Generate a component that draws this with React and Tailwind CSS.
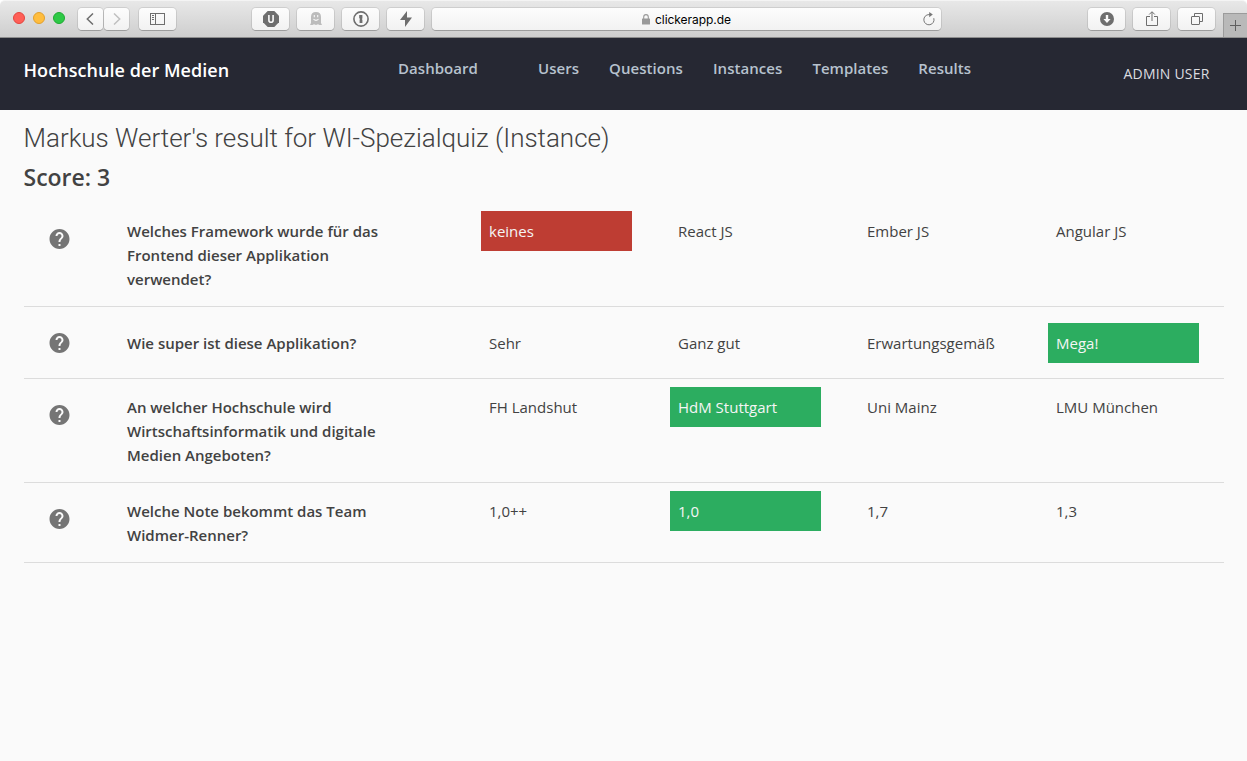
import React from "react";

const sans = "font-['Open_Sans','Noto_Sans',sans-serif]";

function ToolButton({ className = "", children }) {
  return (
    <div
      className={
        "flex h-[22px] items-center justify-center rounded-[4px] bg-linear-to-b from-[#fdfdfd] to-[#f2f2f2] text-[#6e6e6e] shadow-[0_0_0_1px_rgba(0,0,0,0.09),0_1px_0_0_rgba(0,0,0,0.18)] " +
        className
      }
    >
      {children}
    </div>
  );
}

function BrowserBar() {
  return (
    <div className="bg-white">
      <div className="flex h-[38px] rounded-t-[5px] border-t border-b border-t-[#f4f4f4] border-b-[#8d8d8d] bg-linear-to-b from-[#e8e8e8] to-[#cecece] pl-[13px]">
        <div className="flex w-[65px] gap-2 pt-[11px]">
          <span className="h-3 w-3 rounded-full border border-[#e2463f] bg-[#ff5f57]" />
          <span className="h-3 w-3 rounded-full border border-[#e1a02e] bg-[#ffbd3e]" />
          <span className="h-3 w-3 rounded-full border border-[#1faa32] bg-[#2ec946]" />
        </div>
        <div className="flex pt-[7px]">
          <ToolButton className="w-[25px] pr-[2px]">
            <svg width="8" height="12" viewBox="0 0 8 12" fill="none" stroke="#6e6e6e" strokeWidth="1.5"><path d="M7 .5L1.3 6L7 11.5" /></svg>
          </ToolButton>
          <ToolButton className="ml-px w-[25px]">
            <svg width="8" height="12" viewBox="0 0 8 12" fill="none" stroke="#c0c0c0" strokeWidth="1.5"><path d="M1 .5L6.7 6L1 11.5" /></svg>
          </ToolButton>
          <ToolButton className="ml-[10px] w-[37px]">
            <svg width="15" height="12" viewBox="0 0 15 12" fill="none" stroke="#6e6e6e"><rect x=".5" y=".5" width="14" height="11" /><path d="M5.5 0V12M2 2.5H4M2 4.5H4M2 6.5H4" /></svg>
          </ToolButton>
          <ToolButton className="ml-[76px] w-[37px]">
            <svg width="16" height="16" viewBox="0 0 16 16"><path d="M4.7 0H11.3L16 4.7V11.3L11.3 16H4.7L0 11.3V4.7Z" fill="#6e6e6e" /><path d="M5.9 4V9.2Q5.9 11.2 8 11.2T10.1 9.2V4" fill="none" stroke="#fafafa" strokeWidth="1.6" /></svg>
          </ToolButton>
          <ToolButton className="ml-2 w-[37px]">
            <svg width="12" height="14" viewBox="0 0 12 14"><path d="M1 5Q1 0 6 0T11 5V11L12 13L9.5 13L8 12.2L6 13L4 12.2L2.5 13H0L1 11Z" fill="#bcbcbc" /><path d="M4.3 3V5.2M7.7 3V5.2M3.5 7.2Q6 9.6 8.5 7.2" fill="none" stroke="#f8f8f8" strokeWidth="1.1" /></svg>
          </ToolButton>
          <ToolButton className="ml-2 w-[37px]">
            <svg width="16" height="16" viewBox="0 0 16 16"><circle cx="8" cy="8" r="7.1" fill="none" stroke="#6e6e6e" strokeWidth="1.6" /><path d="M6.2 4H9.4V7.4L8.8 8L9.4 8.7V12H6.6V8.6L7.2 8L6.2 7.3Z" fill="#6e6e6e" /></svg>
          </ToolButton>
          <ToolButton className="ml-2 w-[37px]">
            <svg width="12" height="16" viewBox="0 0 12 16"><path d="M7 0L0 9H5L5 16L12 6.5H7Z" fill="#6e6e6e" /></svg>
          </ToolButton>
          <ToolButton className="ml-2 w-[509px] justify-between! pr-1.5 pl-[210px]">
            <div className="flex items-center gap-[5px]">
              <svg width="8" height="11" viewBox="0 0 8 11"><rect y="4.5" width="8" height="6" rx=".5" fill="#999" /><path d="M1.7 5V3Q1.7 .6 4 .6T6.3 3V5" fill="none" stroke="#999" strokeWidth="1.1" /></svg>
              <span className="pt-px font-[Inter,sans-serif] text-[12px] leading-[22px] tracking-[-0.05px] text-black">clickerapp.de</span>
            </div>
            <svg width="12" height="14" viewBox="0 0 12 14" fill="none" stroke="#777"><path d="M10.8 6.2A5.1 5.1 0 1 1 6 2.6H8" /><path d="M6.2 0L9.8 2.6L6.2 5.2Z" fill="#777" stroke="none" /></svg>
          </ToolButton>
          <ToolButton className="ml-[147px] w-[37px]">
            <svg width="14" height="14" viewBox="0 0 14 14"><circle cx="7" cy="7" r="7" fill="#6e6e6e" /><path d="M5.8 3H8.2V7H10.6L7 11L3.4 7H5.8Z" fill="#fafafa" /></svg>
          </ToolButton>
          <ToolButton className="ml-2 w-[37px] pb-[2px]">
            <svg width="12" height="15" viewBox="0 0 12 15" fill="none" stroke="#6e6e6e"><path d="M4 5.5H.5V14.5H11.5V5.5H8M6 10V1M3.2 3.5L6 .7L8.8 3.5" /></svg>
          </ToolButton>
          <ToolButton className="ml-2 w-[37px]">
            <svg width="12" height="12" viewBox="0 0 12 12" fill="none" stroke="#6e6e6e"><rect x=".5" y="3.5" width="8" height="8" rx=".5" /><path d="M3.5 3.5V.5H11.5V8.5H8.5" /></svg>
          </ToolButton>
        </div>
        <div className="ml-[8px] mt-[12px] flex flex-1 items-center justify-center border-t border-l border-[#9b9b9b] bg-[#b9b9b9]">
          <svg width="11" height="11" viewBox="0 0 11 11" stroke="#5f5f5f"><path d="M5.5 0V11M0 5.5H11" /></svg>
        </div>
      </div>
    </div>
  );
}

function AppHeader() {
  return (
    <header className="flex h-[72px] bg-[#262833]">
      <div className="w-[398px] pl-[23.5px] pt-5 text-[18px] leading-6 font-semibold tracking-[0.06px] text-white">
        Hochschule der Medien
      </div>
      <nav className="flex flex-1 gap-[30px] pt-[18px] text-[15px] leading-6 font-semibold tracking-[0.05px] text-[#b7c2ce]">
        <span className="mr-[30px]">Dashboard</span>
        <span>Users</span>
        <span>Questions</span>
        <span>Instances</span>
        <span>Templates</span>
        <span>Results</span>
      </nav>
      <div className="pt-6 pr-[37.5px] text-[14px] leading-6 tracking-[0.2px] text-[#dcdde0]">ADMIN USER</div>
    </header>
  );
}

const rows = [
  { question: "Welches Framework wurde für das Frontend dieser Applikation verwendet?", answers: ["keines", "React JS", "Ember JS", "Angular JS"], wrong: 0 },
  { question: "Wie super ist diese Applikation?", answers: ["Sehr", "Ganz gut", "Erwartungsgemäß", "Mega!"], right: 3 },
  { question: "An welcher Hochschule wird Wirtschaftsinformatik und digitale Medien Angeboten?", answers: ["FH Landshut", "HdM Stuttgart", "Uni Mainz", "LMU München"], right: 1 },
  { question: "Welche Note bekommt das Team Widmer-Renner?", answers: ["1,0++", "1,0", "1,7", "1,3"], right: 1 },
];

function ResultRow({ question, answers, right, wrong }) {
  const single = question.length < 35;
  return (
    <li className={"flex items-start border-b border-[#dcdcdc] " + (single ? "pt-4 pb-[15px]" : "pt-2 pb-[7px]")}>
      <div className={"w-[95px] pl-[23.5px] " + (single ? "pt-2" : "pt-4")}>
        <svg width="24" height="24" viewBox="0.5 0 24 24" fill="#757575"><path d="M12 2C6.48 2 2 6.48 2 12s4.48 10 10 10 10-4.48 10-10S17.52 2 12 2zm1 17h-2v-2h2v2zm2.07-7.75l-.9.92C13.45 12.9 13 13.5 13 15h-2v-.5c0-1.1.45-2.1 1.17-2.83l1.24-1.26c.37-.36.59-.86.59-1.41 0-1.1-.9-2-2-2s-2 .9-2 2H8c0-2.21 1.79-4 4-4s4 1.79 4 4c0 .88-.36 1.68-.93 2.25z" /></svg>
      </div>
      <div className="w-[283px] p-2 font-semibold">{question}</div>
      <div className="ml-[79px] flex gap-[38px]">
        {answers.map((a, i) => (
          <div key={a} className={"w-[151px] p-2 " + (i === right ? "bg-[#2cad60] text-[#f5f5f5]" : i === wrong ? "bg-[#be3d33] text-[#f5f5f5]" : "")}>
            {a}
          </div>
        ))}
      </div>
    </li>
  );
}

export default function App() {
  return (
    <div className={"h-[761px] w-[1247px] overflow-hidden bg-[#fafafa] text-[#424242] " + sans}>
      <BrowserBar />
      <AppHeader />
      <main className="pr-[23px] pl-6">
        <h1 className="-ml-[0.5px] pt-[10px] font-[Roboto,sans-serif] text-[26px] leading-9 font-light tracking-[-0.02px]">
          Markus Werter's result for WI-Spezialquiz (Instance)
        </h1>
        <h2 className="-ml-[0.5px] pt-[5px] text-[23px] leading-8 font-semibold">Score: 3</h2>
        <ul className="mt-[10px] text-[15px] leading-6">
          {rows.map((r) => (
            <ResultRow key={r.question} {...r} />
          ))}
        </ul>
      </main>
    </div>
  );
}
